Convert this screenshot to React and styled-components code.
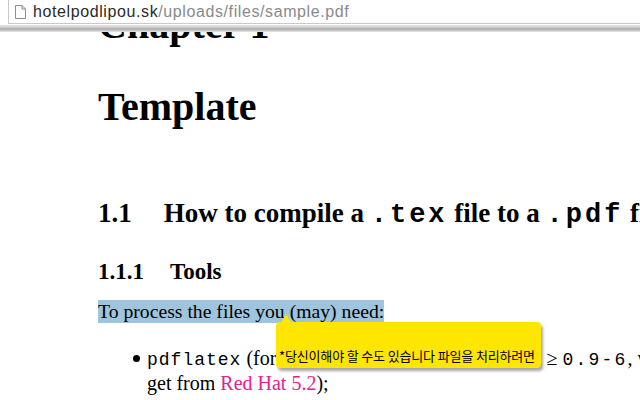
import React from "react";
import styled, { createGlobalStyle } from "styled-components";

const GlobalStyle = createGlobalStyle`
  html, body {
    margin: 0;
    padding: 0;
    width: 640px;
    height: 400px;
    overflow: hidden;
    background: #fff;
  }
`;

const Screen = styled.div`
  width: 640px;
  height: 400px;
  display: flex;
  flex-direction: column;
  overflow: hidden;
`;

const TopBar = styled.div`
  height: 25px;
  background: #fff;
  padding-left: 8px;
  display: flex;
  position: relative;
  z-index: 2;
`;

const Omnibox = styled.div`
  flex: 1;
  height: 24px;
  border: 1px solid #c9c9c9;
  border-top: none;
  border-right: none;
  box-sizing: border-box;
  display: flex;
  align-items: center;
  padding-left: 6px;
  gap: 7px;
  font-family: "Liberation Sans", Arial, sans-serif;
  font-size: 16px;
  letter-spacing: 0.6px;
  white-space: nowrap;
`;

const Host = styled.span`
  color: #2a2a2a;
`;

const Path = styled.span`
  color: #8a8a8a;
`;

const ToolbarShadow = styled.div`
  height: 7px;
  background: linear-gradient(
    to bottom,
    #e2e2e2 0px,
    #d6d6d6 2px,
    #a9a9a9 4px,
    #bdbdbd 5px,
    #e6e6e6 7px
  );
  position: relative;
  z-index: 2;
`;

const Viewport = styled.div`
  flex: 1;
  overflow: hidden;
  position: relative;
  padding-left: 98px;
  font-family: "Liberation Serif", "Times New Roman", serif;
  color: #000;
`;

const ChapterTitle = styled.h1`
  margin: ${(p) => p.$top}px 0 0;
  font-size: 40px;
  line-height: 48px;
  font-weight: bold;
  white-space: nowrap;
`;

const SectionTitle = styled.h2`
  margin: ${(p) => p.$top}px 0 0;
  font-size: ${(p) => p.$size}px;
  line-height: ${(p) => p.$line}px;
  font-weight: bold;
  white-space: nowrap;
  display: flex;
  gap: ${(p) => p.$gap}px;
`;

const Code = styled.span`
  font-family: "Liberation Mono", "Courier New", monospace;
  font-size: ${(p) => p.$size || 18}px;
  font-weight: ${(p) => (p.$bold ? "bold" : "normal")};
  letter-spacing: ${(p) => p.$spacing || 0}px;
`;

const Paragraph = styled.p`
  margin: 14px 0 0;
  font-size: 19.7px;
  line-height: 22px;
  white-space: nowrap;
`;

const Selected = styled.span`
  background: #9fc4dd;
  padding: 0 0 1px;
`;

const BulletList = styled.ul`
  margin: 25px 0 0;
  padding-left: 49px;
  font-size: 20px;
  line-height: 23px;
  list-style: none;
  position: relative;
`;

const Item = styled.li`
  position: relative;
  white-space: nowrap;

  &::before {
    content: "";
    position: absolute;
    left: -14px;
    top: 8px;
    width: 7px;
    height: 7px;
    border-radius: 50%;
    background: #000;
  }
`;

const Link = styled.span`
  color: #e8208c;
`;

const Tooltip = styled.div`
  position: absolute;
  left: 276px;
  top: 290px;
  width: 265px;
  height: 46px;
  background: #ffe600;
  border-radius: 4px;
  box-shadow: 2px 3px 3px rgba(0, 0, 0, 0.35);
  display: flex;
  align-items: flex-end;
  padding: 0 3px 5px;
  box-sizing: border-box;
  font-family: "Noto Sans CJK KR", "Noto Sans", sans-serif;
  font-size: 13px;
  line-height: 15px;
  letter-spacing: -0.15px;
  color: #000;
  white-space: nowrap;
  z-index: 3;

  &::before {
    content: "";
    position: absolute;
    left: 5px;
    top: -8px;
    border-left: 5px solid transparent;
    border-right: 6px solid transparent;
    border-bottom: 9px solid #ffe600;
  }
`;

function PageIcon() {
  return (
    <svg width="11" height="14" viewBox="0 0 11 14">
      <path
        d="M0.5 0.5 H7 L10.5 4 V13.5 H0.5 Z M7 0.5 V4 H10.5"
        fill="#fff"
        stroke="#8c8c8c"
        strokeWidth="1"
      />
    </svg>
  );
}

export default function App() {
  return (
    <Screen>
      <GlobalStyle />
      <TopBar>
        <Omnibox>
          <PageIcon />
          <span>
            <Host>hotelpodlipou.sk</Host>
            <Path>/uploads/files/sample.pdf</Path>
          </span>
        </Omnibox>
      </TopBar>
      <ToolbarShadow />
      <Viewport>
        <ChapterTitle $top={-31}>Chapter 1</ChapterTitle>
        <ChapterTitle $top={34}>Template</ChapterTitle>
        <SectionTitle $top={66} $size={27} $line={32} $gap={32}>
          <span>1.1</span>
          <span>
            How to compile a <Code $size={27} $bold $spacing={3}>.tex</Code> file to a{" "}
            <Code $size={27} $bold $spacing={3}>.pdf</Code> file
          </span>
        </SectionTitle>
        <SectionTitle $top={27} $size={23} $line={28} $gap={26}>
          <span>1.1.1</span>
          <span>Tools</span>
        </SectionTitle>
        <Paragraph>
          <Selected>To process the files you (may) need:</Selected>
        </Paragraph>
        <BulletList>
          <Item>
            <Code $spacing={1}>pdflatex</Code> (for instance from teTeX distribution ≥{" "}
            <Code $spacing={2.2}>0.9-6</Code>, which you can
            <br />
            get from <Link>Red Hat 5.2</Link>);
          </Item>
        </BulletList>
        <Tooltip>*당신이해야 할 수도 있습니다 파일을 처리하려면</Tooltip>
      </Viewport>
    </Screen>
  );
}
